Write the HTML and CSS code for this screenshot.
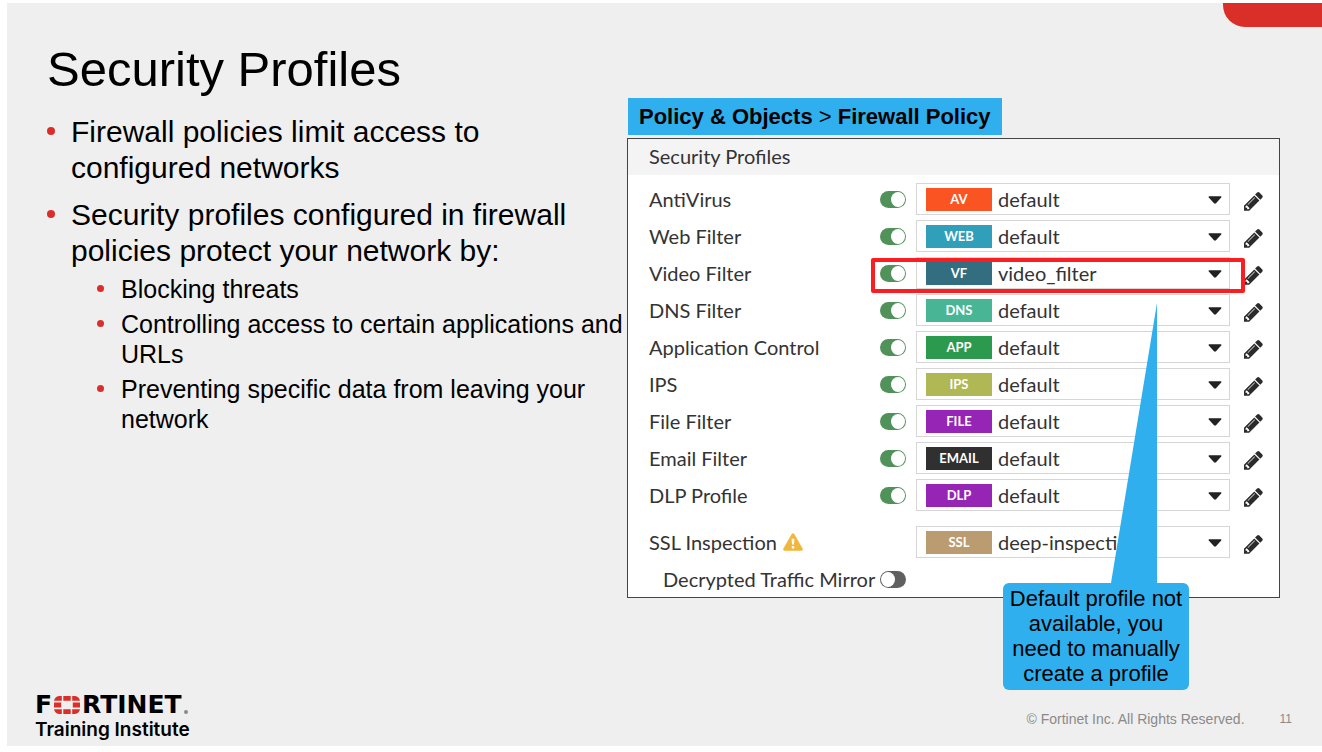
FILE: index.html
```html
<!DOCTYPE html>
<html lang="en">
<head>
<meta charset="utf-8">
<meta name="viewport" content="width=device-width, initial-scale=1">
<title>Security Profiles</title>
<link rel="stylesheet" href="styles.css">
</head>
<body>
<svg class="sprite" aria-hidden="true">
  <symbol id="pencil" viewBox="0 140 1536 1536">
    <path d="M363 1536l91-91-235-235-91 91v107h128v128h107zM886 608q0-22-22-22-10 0-17 7l-542 542q-7 7-7 17 0 22 22 22 10 0 17-7l542-542q7-7 7-17zM832 416l416 416-832 832h-416v-416zM1515 512q0 53-37 90l-166 166-416-416 166-165q36-38 90-38 53 0 91 38l235 234q37 39 37 91z"/>
  </symbol>
  <symbol id="caret" viewBox="0 0 14 8">
    <path d="M1.2 0.3h11.6q1 .2.4 1.1L8 7.2q-1 .9-2 0L.8 1.4Q.2.5 1.2.3z"/>
  </symbol>
</svg>
<main class="slide">
  <div class="corner-tab"></div>
  <h1 class="title">Security Profiles</h1>
  <div class="content">
    <ul class="points">
      <li class="point"><p class="point-text">Firewall policies limit access to configured networks</p></li>
      <li class="point">
        <div>
          <p class="point-text">Security profiles configured in firewall policies protect your network by:</p>
          <ul class="subpoints">
            <li class="subpoint"><p>Blocking threats</p></li>
            <li class="subpoint"><p>Controlling access to certain applications and URLs</p></li>
            <li class="subpoint"><p>Preventing specific data from leaving your network</p></li>
          </ul>
        </div>
      </li>
    </ul>
    <section class="demo">
      <p class="path"><b>Policy &amp; Objects</b> &gt; <b>Firewall Policy</b></p>
      <div class="panel">
        <h2 class="panel-title">Security Profiles</h2>
        <div class="rows">
          <div class="row">
            <label class="name" for="av">AntiVirus</label>
            <input class="toggle" type="checkbox" id="av" checked>
            <div class="picker"><span class="badge av">AV</span><select class="select" aria-label="AntiVirus profile"><option>default</option></select><svg class="caret"><use href="#caret"/></svg></div>
            <button class="edit" aria-label="Edit AntiVirus"><svg class="pencil"><use href="#pencil"/></svg></button>
          </div>
          <div class="row">
            <label class="name" for="web">Web Filter</label>
            <input class="toggle" type="checkbox" id="web" checked>
            <div class="picker"><span class="badge web">WEB</span><select class="select" aria-label="Web Filter profile"><option>default</option></select><svg class="caret"><use href="#caret"/></svg></div>
            <button class="edit" aria-label="Edit Web Filter"><svg class="pencil"><use href="#pencil"/></svg></button>
          </div>
          <div class="row">
            <label class="name" for="vf">Video Filter</label>
            <input class="toggle" type="checkbox" id="vf" checked>
            <div class="picker"><span class="badge vf">VF</span><select class="select" aria-label="Video Filter profile"><option>video_filter</option></select><svg class="caret"><use href="#caret"/></svg></div>
            <button class="edit" aria-label="Edit Video Filter"><svg class="pencil"><use href="#pencil"/></svg></button>
            <div class="highlight"></div>
          </div>
          <div class="row">
            <label class="name" for="dns">DNS Filter</label>
            <input class="toggle" type="checkbox" id="dns" checked>
            <div class="picker"><span class="badge dns">DNS</span><select class="select" aria-label="DNS Filter profile"><option>default</option></select><svg class="caret"><use href="#caret"/></svg></div>
            <button class="edit" aria-label="Edit DNS Filter"><svg class="pencil"><use href="#pencil"/></svg></button>
          </div>
          <div class="row">
            <label class="name" for="app">Application Control</label>
            <input class="toggle" type="checkbox" id="app" checked>
            <div class="picker"><span class="badge app">APP</span><select class="select" aria-label="Application Control profile"><option>default</option></select><svg class="caret"><use href="#caret"/></svg></div>
            <button class="edit" aria-label="Edit Application Control"><svg class="pencil"><use href="#pencil"/></svg></button>
          </div>
          <div class="row">
            <label class="name" for="ips">IPS</label>
            <input class="toggle" type="checkbox" id="ips" checked>
            <div class="picker"><span class="badge ips">IPS</span><select class="select" aria-label="IPS profile"><option>default</option></select><svg class="caret"><use href="#caret"/></svg></div>
            <button class="edit" aria-label="Edit IPS"><svg class="pencil"><use href="#pencil"/></svg></button>
          </div>
          <div class="row">
            <label class="name" for="file">File Filter</label>
            <input class="toggle" type="checkbox" id="file" checked>
            <div class="picker"><span class="badge purple">FILE</span><select class="select" aria-label="File Filter profile"><option>default</option></select><svg class="caret"><use href="#caret"/></svg></div>
            <button class="edit" aria-label="Edit File Filter"><svg class="pencil"><use href="#pencil"/></svg></button>
          </div>
          <div class="row">
            <label class="name" for="email">Email Filter</label>
            <input class="toggle" type="checkbox" id="email" checked>
            <div class="picker"><span class="badge email">EMAIL</span><select class="select" aria-label="Email Filter profile"><option>default</option></select><svg class="caret"><use href="#caret"/></svg></div>
            <button class="edit" aria-label="Edit Email Filter"><svg class="pencil"><use href="#pencil"/></svg></button>
          </div>
          <div class="row">
            <label class="name" for="dlp">DLP Profile</label>
            <input class="toggle" type="checkbox" id="dlp" checked>
            <div class="picker"><span class="badge purple">DLP</span><select class="select" aria-label="DLP Profile"><option>default</option></select><svg class="caret"><use href="#caret"/></svg></div>
            <button class="edit" aria-label="Edit DLP Profile"><svg class="pencil"><use href="#pencil"/></svg></button>
          </div>
          <div class="row separate">
            <label class="name" for="ssl">SSL Inspection
              <svg class="warning" viewBox="0 0 20 18" aria-hidden="true"><path fill="#efb73e" d="M8.7 1q1.3-1.6 2.6 0l8.3 14.6q.8 1.9-1.2 2.1H1.6q-2-.2-1.2-2.1z"/><path fill="#fff" d="M8.6 5.8h2.8l-.4 5.8H9zM8.8 13h2.4v2.4H8.8z"/></svg>
            </label>
            <div class="picker"><span class="badge ssl">SSL</span><select class="select" id="ssl"><option>deep-inspection</option></select><svg class="caret"><use href="#caret"/></svg></div>
            <button class="edit" aria-label="Edit SSL Inspection"><svg class="pencil"><use href="#pencil"/></svg></button>
          </div>
          <div class="row">
            <label class="name nested" for="mirror">Decrypted Traffic Mirror</label>
            <input class="toggle" type="checkbox" id="mirror">
          </div>
        </div>
        <aside class="callout">
          <svg class="callout-tail" viewBox="0 0 186 280" aria-hidden="true"><path fill="#2fafed" d="M154 0v280h-46z"/></svg>
          <p class="callout-text">Default profile not available, you need to manually create a profile</p>
        </aside>
      </div>
    </section>
  </div>
  <footer class="footer">
    <div class="brand">
      <div class="wordmark"><span>F</span><svg class="mark" viewBox="0 0 26 18" aria-label="O"><g fill="#da2f29"><path d="M9.3 0h7.4v4.8H9.3zM9.3 13.2h7.4V18H9.3zM0 6.6h7.2v4.8H0zM18.8 6.6H26v4.8h-7.2zM7.8 0v4.8H0Q.8.6 5 0zM18.2 0v4.8H26Q25.2.6 21 0zM7.8 18v-4.8H0q.8 4.2 5 4.8zM18.2 18v-4.8H26q-.8 4.2-5 4.8z"/></g></svg><span>RTINET</span><i class="reg"></i></div>
      <div class="institute">Training Institute</div>
    </div>
    <p class="copyright">© Fortinet Inc. All Rights Reserved.</p>
    <p class="page-number">11</p>
  </footer>
</main>
</body>
</html>
```
FILE: styles.css
```css
* {
  box-sizing: border-box;
}

body {
  margin: 0;
  background: #fff;
  color: #000;
  font-family: "Liberation Sans", Arial, sans-serif;
}

h1, h2, p, ul {
  margin: 0;
  padding: 0;
  font-weight: 400;
}

ul {
  list-style: none;
}

.sprite {
  display: none;
}

.slide {
  position: relative;
  display: flex;
  flex-direction: column;
  min-height: calc(100vh - 9px);
  margin: 3px 0 6px 7px;
  padding: 38px 42px 2px 40px;
  background: #efefef;
}

.corner-tab {
  position: absolute;
  top: 0;
  right: 0;
  width: 99px;
  height: 24px;
  border-bottom-left-radius: 22px;
  background: #da2f29;
}

.title {
  font-size: 49px;
  line-height: 57px;
}

.content {
  display: grid;
  grid-template-columns: 580fr 653fr;
}

/* Bullet lists */
.points {
  display: grid;
  align-content: start;
  gap: 11px;
  padding-top: 16px;
  font-size: 30px;
  line-height: 36px;
}

.point,
.subpoint {
  display: grid;
  grid-template-columns: 24px 1fr;
}

.point::before,
.subpoint::before {
  content: "";
  width: 8px;
  height: 8px;
  margin-top: 13px;
  border-radius: 50%;
  background: #da2f29;
}

.point-text {
  padding-right: 40px;
}

.subpoints {
  display: grid;
  gap: 5px;
  padding: 5px 0 0 26px;
  font-size: 25px;
  line-height: 30px;
}

.subpoint::before {
  width: 7px;
  height: 7px;
  margin-top: 11px;
}

/* Firewall policy panel */
.path {
  width: fit-content;
  margin: 0 0 3px 1px;
  padding: 6px 11px;
  background: #2fafed;
  font-size: 22px;
  line-height: 25px;
}

.panel {
  position: relative;
  border: 1px solid #444;
  background: #fff;
  color: #333;
  font-family: Lato, sans-serif;
  font-size: 20px;
}

.panel-title {
  padding: 0 21px 2px;
  background: #f4f4f4;
  font-size: 20px;
  line-height: 34px;
}

.rows {
  display: grid;
  gap: 5px;
  padding: 8px 16px 2px 21px;
}

.row {
  display: grid;
  grid-template-columns: minmax(0, 221fr) 26px minmax(0, 314fr) 23px;
  grid-template-rows: 32px;
  column-gap: 10px;
  align-items: center;
}

.separate {
  margin-top: 10px;
}

.name {
  display: flex;
  align-items: center;
  gap: 6px;
  grid-area: 1 / 1;
  white-space: nowrap;
}

.nested {
  padding-left: 14px;
}

.warning {
  width: 20px;
  height: 18px;
}

.toggle {
  appearance: none;
  grid-area: 1 / 2;
  display: flex;
  width: 26px;
  height: 17px;
  margin: 0;
  padding: 1px;
  border-radius: 9px;
  background: #606060;
}

.toggle::before {
  content: "";
  width: 14px;
  height: 15px;
  border-radius: 50%;
  background: #fff;
}

.toggle:checked {
  justify-content: flex-end;
  background: #50925a;
}

.picker {
  position: relative;
  grid-area: 1 / 3;
  display: flex;
  align-items: center;
  height: 32px;
  padding-left: 9px;
  border: 1px solid #d6d6d6;
  background: #fff;
}

.badge {
  flex: none;
  width: 66px;
  color: #fff;
  font-size: 13px;
  font-weight: 700;
  line-height: 23px;
  text-align: center;
}

.av { background: #fa5423; }
.web { background: #309fba; }
.vf { background: #336d80; }
.dns { background: #48b694; }
.app { background: #2b994e; }
.ips { background: #afb854; }
.purple { background: #9625b6; }
.email { background: #303030; }
.ssl { background: #ba9c70; }

.select {
  appearance: none;
  flex: 1;
  min-width: 0;
  height: 30px;
  padding: 0 32px 0 6px;
  border: 0;
  background: transparent;
  color: #333;
  font: inherit;
}

.caret {
  position: absolute;
  top: 12px;
  right: 7px;
  width: 14px;
  height: 8px;
  fill: #222;
  pointer-events: none;
}

.edit {
  grid-area: 1 / 4;
  justify-self: end;
  width: 19px;
  height: 19px;
  margin: 4px 0 0;
  padding: 0;
  border: 0;
  background: none;
}

.pencil {
  display: block;
  width: 19px;
  height: 19px;
  fill: #2b2b2b;
}

.highlight {
  grid-area: 1 / 2 / 2 / 4;
  align-self: stretch;
  z-index: 1;
  margin: 1px -15px -4px -9px;
  border: 4px solid #fb1d1f;
  border-radius: 2px;
  pointer-events: none;
}

.callout {
  position: absolute;
  z-index: 2;
  top: 164px;
  right: 90px;
  width: 186px;
  color: #000;
  font-family: "Liberation Sans", Arial, sans-serif;
  font-size: 22px;
  line-height: 25px;
  text-align: center;
  pointer-events: none;
}

.callout-tail {
  display: block;
  width: 186px;
  height: 280px;
}

.callout-text {
  padding: 3px 4px 4px;
  border-radius: 6px;
  background: #2fafed;
}

/* Footer */
.footer {
  display: flex;
  align-items: center;
  margin: auto -12px 0;
  color: #8a8a8a;
}

.brand {
  margin-right: auto;
  color: #000;
}

.wordmark {
  display: flex;
  align-items: center;
  gap: 2px;
  font-family: "DejaVu Sans", sans-serif;
  font-size: 25px;
  font-weight: 700;
  line-height: 22px;
}

.mark {
  width: 26px;
  height: 18px;
}

.reg {
  align-self: flex-end;
  width: 4px;
  height: 4px;
  margin-bottom: 2px;
  border-radius: 50%;
  background: #8a8a8a;
}

.institute {
  font-family: Inter, sans-serif;
  font-size: 19px;
  font-weight: 600;
  line-height: 28px;
}

.copyright {
  margin-right: 35px;
  font-size: 14px;
}

.page-number {
  font-size: 12px;
}
```
